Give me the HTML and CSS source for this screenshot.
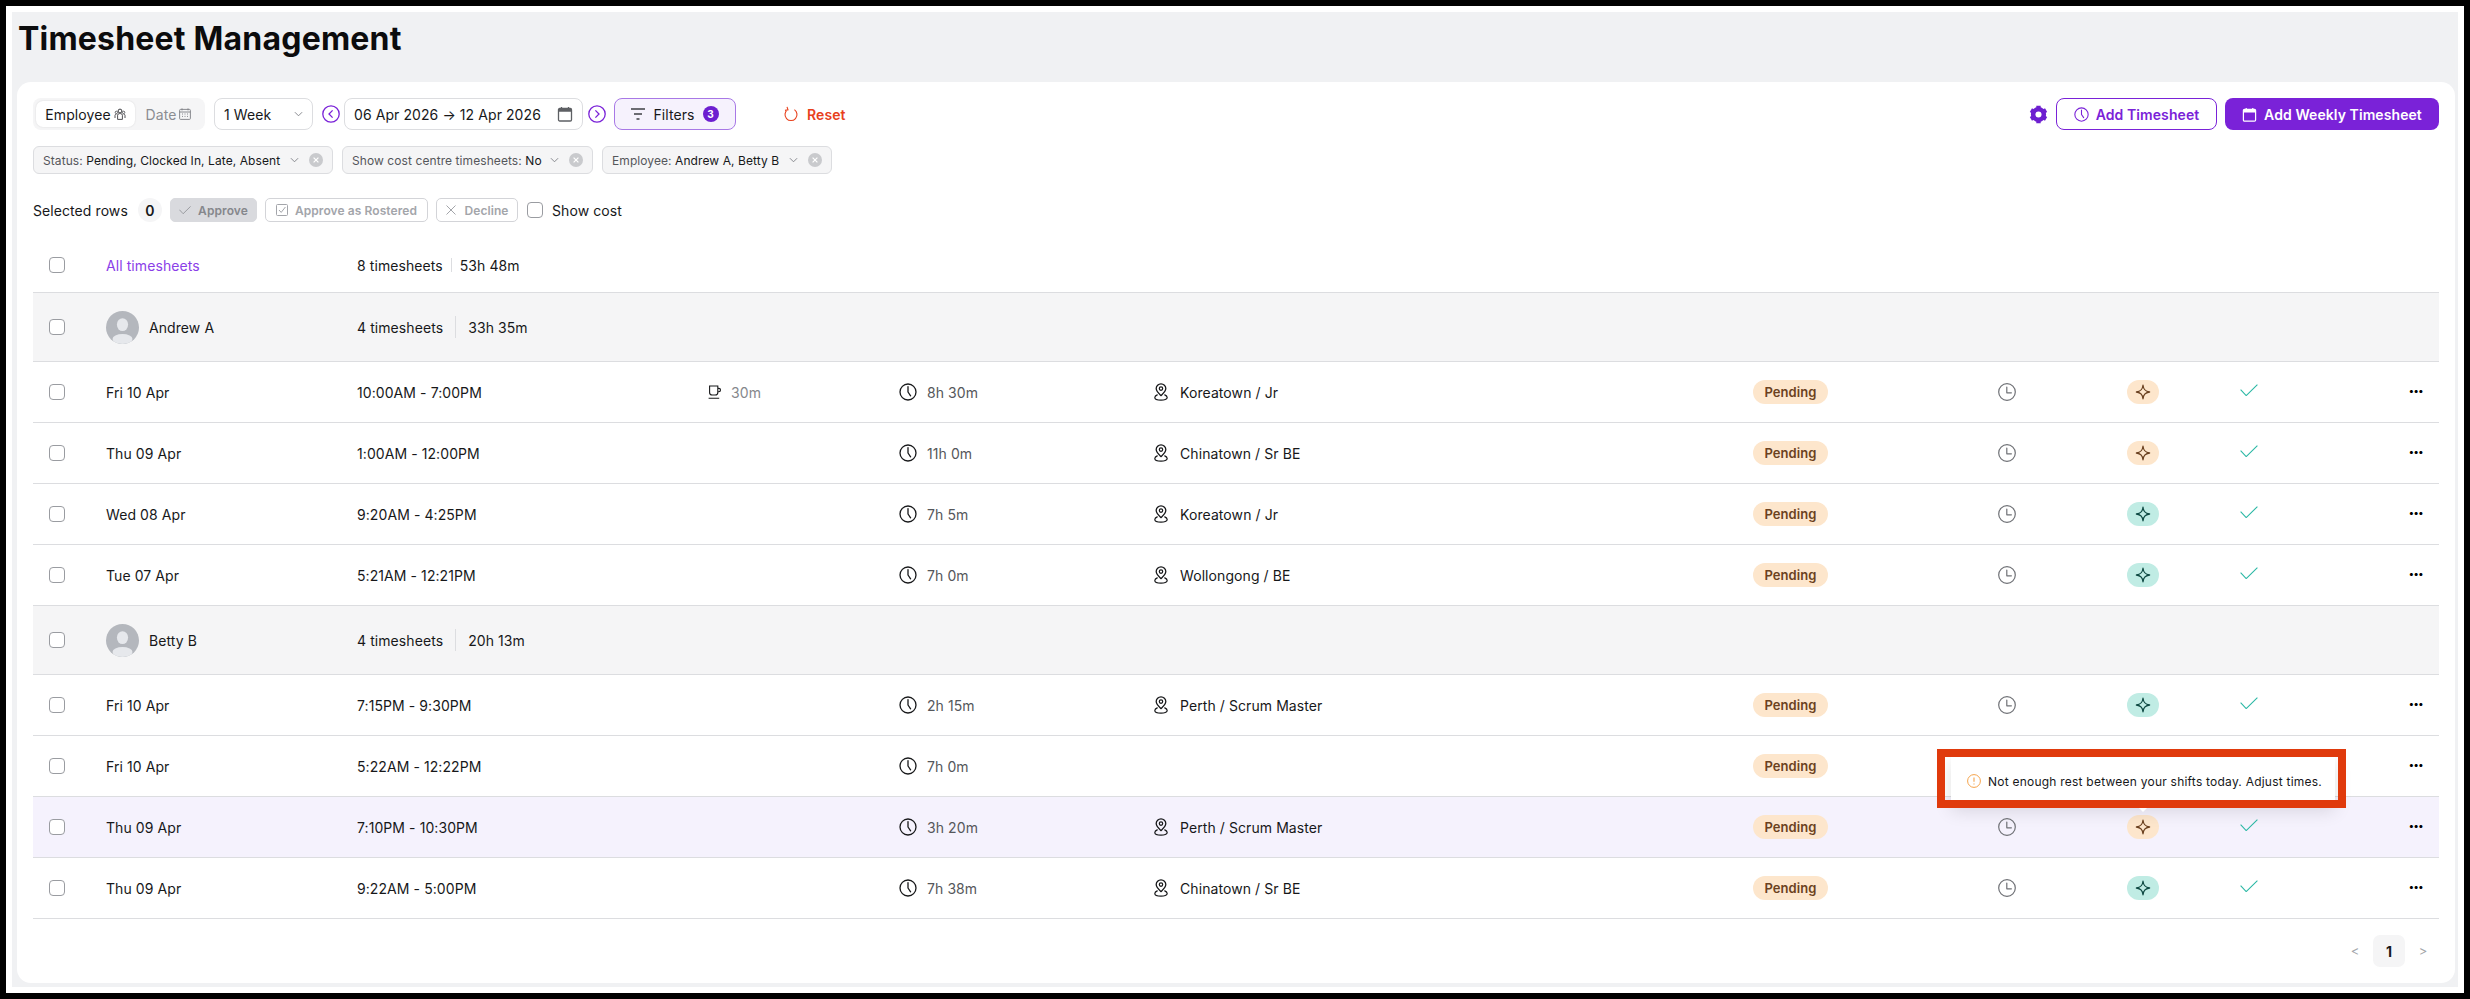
FILE: index.html
```html
<!DOCTYPE html>
<html lang="en">
<head>
  <meta charset="UTF-8">
  <meta name="viewport" content="width=device-width, initial-scale=1.0">
  <title>Timesheet Management</title>
  <link rel="stylesheet" href="styles.css">
</head>
<body>
  <!-- Icons -->
  <svg class="sprite" xmlns="http://www.w3.org/2000/svg">
    <symbol id="i-clock" viewBox="0 0 18 18"><circle cx="9" cy="9" r="8" fill="none" stroke="currentColor" stroke-width="1.3"/><path d="M9 3.6V9l2.6 3.8" fill="none" stroke="currentColor" stroke-width="1.3" stroke-linecap="round" stroke-linejoin="round"/></symbol>
    <symbol id="i-clock-l" viewBox="0 0 18 18"><circle cx="9" cy="9" r="8.3" fill="none" stroke="currentColor" stroke-width="1.2"/><path d="M8.8 4V9.8H13.4" fill="none" stroke="currentColor" stroke-width="1.2" stroke-linecap="round" stroke-linejoin="round"/></symbol>
    <symbol id="i-pin" viewBox="0 0 14 18"><path d="M7 12.6C4.6 10.4 2.2 8.4 2.2 5.6a4.8 4.8 0 0 1 9.6 0c0 2.8-2.4 4.8-4.8 7z" fill="none" stroke="currentColor" stroke-width="1.3"/><circle cx="7" cy="5.6" r="1.7" fill="none" stroke="currentColor" stroke-width="1.2"/><path d="M3.6 11.6C1.8 12.4.8 13.4.8 14.6c0 1.6 2.8 2.6 6.2 2.6s6.2-1 6.2-2.6c0-1.2-1-2.2-2.8-3" fill="none" stroke="currentColor" stroke-width="1.2"/></symbol>
    <symbol id="i-star" viewBox="0 0 16 16"><path d="M8 1.2C8.5 5.6 10 7.4 14.6 8 10 8.6 8.5 10.4 8 14.8 7.5 10.4 6 8.6 1.4 8 6 7.4 7.5 5.6 8 1.2z" fill="none" stroke="currentColor" stroke-width="1.3" stroke-linejoin="round"/></symbol>
    <symbol id="i-check" viewBox="0 0 18 12"><path d="M.6 5.6l5.6 6L17.4.6" fill="none" stroke="currentColor" stroke-width="1.1"/></symbol>
    <symbol id="i-chev" viewBox="0 0 10 6"><path d="M1 1l4 4 4-4" fill="none" stroke="currentColor" stroke-width="1"/></symbol>
    <symbol id="i-cal" viewBox="0 0 16 16"><rect x="1.5" y="2.5" width="13" height="12.5" rx="1.2" fill="none" stroke="currentColor" stroke-width="1.3"/><path d="M1.5 3.6a1 1 0 0 1 1-1h11a1 1 0 0 1 1 1v2.2h-13z" fill="currentColor"/><path d="M4.5 1v2M11.5 1v2" stroke="currentColor" stroke-width="1.3"/></symbol>
    <symbol id="i-x" viewBox="0 0 14 14"><circle cx="7" cy="7" r="7" fill="#c9cacd"/><path d="M4.6 4.6l4.8 4.8M9.4 4.6L4.6 9.4" stroke="#fff" stroke-width="1.2"/></symbol>
  </svg>

  <div class="frame">
    <main class="page">
      <h1>Timesheet Management</h1>

      <section class="card">
        <!-- Toolbar -->
        <div class="toolbar">
          <div class="segment">
            <span class="segment-on">Employee
              <svg class="ico-12 ico-dark" viewBox="0 0 12 12"><circle cx="6" cy="3" r="1.9" fill="none" stroke="currentColor"/><circle cx="2.4" cy="4.4" r="1.2" fill="none" stroke="currentColor" stroke-width=".8"/><circle cx="9.6" cy="4.4" r="1.2" fill="none" stroke="currentColor" stroke-width=".8"/><path d="M3.6 11.4V7.2a1.8 1.8 0 0 1 1.8-1.6h1.2a1.8 1.8 0 0 1 1.8 1.6v4.2zM1 10V7.4c0-.8.6-1.2 1.4-1.2M11 10V7.4c0-.8-.6-1.2-1.4-1.2" fill="none" stroke="currentColor" stroke-width=".9"/></svg>
            </span>
            <span class="segment-off">Date
              <svg class="ico-12" viewBox="0 0 12 12"><rect x=".6" y="1.4" width="10.8" height="10" rx="1" fill="none" stroke="currentColor" stroke-width=".9"/><path d="M.6 4h10.8M3 6h1M5.5 6h1M8 6h1M3 8.4h1M5.5 8.4h1M8 8.4h1M3 .4v2M9 .4v2" fill="none" stroke="currentColor" stroke-width=".9"/></svg>
            </span>
          </div>
          <div class="select week">1 Week <svg class="ico-chev"><use href="#i-chev"/></svg></div>
          <button class="round-nav"><svg viewBox="0 0 18 18"><circle cx="9" cy="9" r="8.2" fill="none" stroke="currentColor" stroke-width="1.3"/><path d="M10.6 5.4L7 9l3.6 3.6" fill="none" stroke="currentColor" stroke-width="1.3"/></svg></button>
          <div class="select date-range">06 Apr 2026 → 12 Apr 2026 <svg class="ico-cal"><use href="#i-cal"/></svg></div>
          <button class="round-nav next"><svg viewBox="0 0 18 18"><circle cx="9" cy="9" r="8.2" fill="none" stroke="currentColor" stroke-width="1.3"/><path d="M7.4 5.4L11 9l-3.6 3.6" fill="none" stroke="currentColor" stroke-width="1.3"/></svg></button>
          <button class="filters">
            <svg class="ico-filter" viewBox="0 0 14 12"><path d="M0 1h14M3 6h8M5.5 11h3" stroke="currentColor" stroke-width="1.3"/></svg>
            Filters <span class="count">3</span>
          </button>
          <button class="reset">
            <svg viewBox="0 0 14 16"><path d="M3.6 3.6a6 6 0 1 0 6.8 0M3 .8l1 3-3 .6" fill="none" stroke="currentColor" stroke-width="1.1"/></svg>
            Reset
          </button>
          <div class="toolbar-right">
            <svg class="gear" viewBox="0 0 20 20"><path d="M10 .8v18.4M2 5.4l16 9.2M2 14.6l16-9.2" stroke="currentColor" stroke-width="4.6"/><circle cx="10" cy="10" r="5.8" fill="none" stroke="currentColor" stroke-width="4.4"/><circle cx="10" cy="10" r="3.2" fill="#fff"/></svg>
            <button class="btn btn-outline"><svg class="ico-15"><use href="#i-clock"/></svg> Add Timesheet</button>
            <button class="btn btn-solid"><svg class="ico-15"><use href="#i-cal"/></svg> Add Weekly Timesheet</button>
          </div>
        </div>

        <!-- Active filters -->
        <div class="chips">
          <div class="chip chip-status"><span class="chip-key">Status:</span> Pending, Clocked In, Late, Absent <svg class="ico-chev"><use href="#i-chev"/></svg><svg class="ico-x"><use href="#i-x"/></svg></div>
          <div class="chip chip-cost"><span class="chip-key">Show cost centre timesheets:</span> No <svg class="ico-chev"><use href="#i-chev"/></svg><svg class="ico-x"><use href="#i-x"/></svg></div>
          <div class="chip chip-emp"><span class="chip-key">Employee:</span> Andrew A, Betty B <svg class="ico-chev"><use href="#i-chev"/></svg><svg class="ico-x"><use href="#i-x"/></svg></div>
        </div>

        <!-- Bulk actions -->
        <div class="bulk">
          <span class="bulk-label">Selected rows</span>
          <span class="bulk-count">0</span>
          <button class="act act-approve"><svg class="ico-check-sm"><use href="#i-check"/></svg> Approve</button>
          <button class="act act-rostered"><svg class="ico-12" viewBox="0 0 12 12"><rect x=".5" y=".5" width="11" height="11" rx="1" fill="none" stroke="currentColor"/><path d="M3 6l2.2 2.4L9.4 3" fill="none" stroke="currentColor"/></svg> Approve as Rostered</button>
          <button class="act act-decline"><svg class="ico-12" viewBox="0 0 12 12"><path d="M1.5 1.5l9 9M10.5 1.5l-9 9" stroke="currentColor"/></svg> Decline</button>
          <label class="show-cost"><span class="box"></span> Show cost</label>
        </div>

        <!-- Table -->
        <div class="table">
          <div class="row row-all">
            <div class="c-box"><span class="box"></span></div>
            <div class="link">All timesheets</div>
            <div class="summary span"><span>8 timesheets</span><span class="sep"></span><span>53h 48m</span></div>
          </div>

          <div class="row row-group">
            <div class="c-box"><span class="box"></span></div>
            <div class="person"><svg class="avatar" viewBox="0 0 33 33"><circle cx="16.5" cy="16.5" r="16.5" fill="#b4b7bd"/><ellipse cx="16.5" cy="13.6" rx="5.6" ry="6.4" fill="#e6e8ec"/><ellipse cx="16.5" cy="28" rx="10" ry="5" fill="#e6e8ec"/></svg> Andrew A</div>
            <div class="summary wide span"><span>4 timesheets</span><span class="sep"></span><span>33h 35m</span></div>
          </div>

          <div class="row">
            <div class="c-box"><span class="box"></span></div>
            <div>Fri 10 Apr</div>
            <div>10:00AM - 7:00PM</div>
            <div class="cell-break"><svg class="ico-cup" viewBox="0 0 14 14"><path d="M1.6 1h8.2v6.4a2.6 2.6 0 0 1-2.6 2.6H4.2a2.6 2.6 0 0 1-2.6-2.6zM9.8 3.4h1a1.6 1.6 0 0 1 0 3.4h-1M.6 13.2h10.6" fill="none" stroke="currentColor" stroke-width="1.1"/></svg> 30m</div>
            <div class="cell-hours"><svg class="ico-18"><use href="#i-clock"/></svg> 8h 30m</div>
            <div class="cell-loc"><svg class="ico-pin"><use href="#i-pin"/></svg> Koreatown / Jr</div>
            <div><span class="pill">Pending</span></div>
            <div class="cell-clock"><svg class="ico-18"><use href="#i-clock-l"/></svg></div>
            <div><span class="star star-orange"><svg class="ico-star"><use href="#i-star"/></svg></span></div>
            <div class="cell-check"><svg class="ico-check"><use href="#i-check"/></svg></div>
            <div class="dots">•••</div>
          </div>

          <div class="row">
            <div class="c-box"><span class="box"></span></div>
            <div>Thu 09 Apr</div>
            <div>1:00AM - 12:00PM</div>
            <div></div>
            <div class="cell-hours"><svg class="ico-18"><use href="#i-clock"/></svg> 11h 0m</div>
            <div class="cell-loc"><svg class="ico-pin"><use href="#i-pin"/></svg> Chinatown / Sr BE</div>
            <div><span class="pill">Pending</span></div>
            <div class="cell-clock"><svg class="ico-18"><use href="#i-clock-l"/></svg></div>
            <div><span class="star star-orange"><svg class="ico-star"><use href="#i-star"/></svg></span></div>
            <div class="cell-check"><svg class="ico-check"><use href="#i-check"/></svg></div>
            <div class="dots">•••</div>
          </div>

          <div class="row">
            <div class="c-box"><span class="box"></span></div>
            <div>Wed 08 Apr</div>
            <div>9:20AM - 4:25PM</div>
            <div></div>
            <div class="cell-hours"><svg class="ico-18"><use href="#i-clock"/></svg> 7h 5m</div>
            <div class="cell-loc"><svg class="ico-pin"><use href="#i-pin"/></svg> Koreatown / Jr</div>
            <div><span class="pill">Pending</span></div>
            <div class="cell-clock"><svg class="ico-18"><use href="#i-clock-l"/></svg></div>
            <div><span class="star star-teal"><svg class="ico-star"><use href="#i-star"/></svg></span></div>
            <div class="cell-check"><svg class="ico-check"><use href="#i-check"/></svg></div>
            <div class="dots">•••</div>
          </div>

          <div class="row">
            <div class="c-box"><span class="box"></span></div>
            <div>Tue 07 Apr</div>
            <div>5:21AM - 12:21PM</div>
            <div></div>
            <div class="cell-hours"><svg class="ico-18"><use href="#i-clock"/></svg> 7h 0m</div>
            <div class="cell-loc"><svg class="ico-pin"><use href="#i-pin"/></svg> Wollongong / BE</div>
            <div><span class="pill">Pending</span></div>
            <div class="cell-clock"><svg class="ico-18"><use href="#i-clock-l"/></svg></div>
            <div><span class="star star-teal"><svg class="ico-star"><use href="#i-star"/></svg></span></div>
            <div class="cell-check"><svg class="ico-check"><use href="#i-check"/></svg></div>
            <div class="dots">•••</div>
          </div>

          <div class="row row-group">
            <div class="c-box"><span class="box"></span></div>
            <div class="person"><svg class="avatar" viewBox="0 0 33 33"><circle cx="16.5" cy="16.5" r="16.5" fill="#b4b7bd"/><ellipse cx="16.5" cy="13.6" rx="5.6" ry="6.4" fill="#e6e8ec"/><ellipse cx="16.5" cy="28" rx="10" ry="5" fill="#e6e8ec"/></svg> Betty B</div>
            <div class="summary wide span"><span>4 timesheets</span><span class="sep"></span><span>20h 13m</span></div>
          </div>

          <div class="row">
            <div class="c-box"><span class="box"></span></div>
            <div>Fri 10 Apr</div>
            <div>7:15PM - 9:30PM</div>
            <div></div>
            <div class="cell-hours"><svg class="ico-18"><use href="#i-clock"/></svg> 2h 15m</div>
            <div class="cell-loc"><svg class="ico-pin"><use href="#i-pin"/></svg> Perth / Scrum Master</div>
            <div><span class="pill">Pending</span></div>
            <div class="cell-clock"><svg class="ico-18"><use href="#i-clock-l"/></svg></div>
            <div><span class="star star-teal"><svg class="ico-star"><use href="#i-star"/></svg></span></div>
            <div class="cell-check"><svg class="ico-check"><use href="#i-check"/></svg></div>
            <div class="dots">•••</div>
          </div>

          <div class="row">
            <div class="c-box"><span class="box"></span></div>
            <div>Fri 10 Apr</div>
            <div>5:22AM - 12:22PM</div>
            <div></div>
            <div class="cell-hours"><svg class="ico-18"><use href="#i-clock"/></svg> 7h 0m</div>
            <div></div>
            <div><span class="pill">Pending</span></div>
            <div></div>
            <div></div>
            <div></div>
            <div class="dots">•••</div>
          </div>

          <div class="row row-hover">
            <div class="c-box"><span class="box"></span></div>
            <div>Thu 09 Apr</div>
            <div>7:10PM - 10:30PM</div>
            <div></div>
            <div class="cell-hours"><svg class="ico-18"><use href="#i-clock"/></svg> 3h 20m</div>
            <div class="cell-loc"><svg class="ico-pin"><use href="#i-pin"/></svg> Perth / Scrum Master</div>
            <div><span class="pill">Pending</span></div>
            <div class="cell-clock"><svg class="ico-18"><use href="#i-clock-l"/></svg></div>
            <div>
              <span class="star star-orange">
                <svg class="ico-star"><use href="#i-star"/></svg>
                <span class="tooltip">
                  <svg class="ico-warn" viewBox="0 0 14 14"><circle cx="7" cy="7" r="6.4" fill="none" stroke="currentColor" stroke-width="1"/><path d="M7 3.4v4.4M7 9.4v1.2" stroke="currentColor" stroke-width="1.1"/></svg>
                  Not enough rest between your shifts today. Adjust times.
                </span>
              </span>
            </div>
            <div class="cell-check"><svg class="ico-check"><use href="#i-check"/></svg></div>
            <div class="dots">•••</div>
          </div>

          <div class="row">
            <div class="c-box"><span class="box"></span></div>
            <div>Thu 09 Apr</div>
            <div>9:22AM - 5:00PM</div>
            <div></div>
            <div class="cell-hours"><svg class="ico-18"><use href="#i-clock"/></svg> 7h 38m</div>
            <div class="cell-loc"><svg class="ico-pin"><use href="#i-pin"/></svg> Chinatown / Sr BE</div>
            <div><span class="pill">Pending</span></div>
            <div class="cell-clock"><svg class="ico-18"><use href="#i-clock-l"/></svg></div>
            <div><span class="star star-teal"><svg class="ico-star"><use href="#i-star"/></svg></span></div>
            <div class="cell-check"><svg class="ico-check"><use href="#i-check"/></svg></div>
            <div class="dots">•••</div>
          </div>
        </div>

        <!-- Pagination -->
        <div class="pager">
          <span class="pager-arrow">&lt;</span>
          <span class="pager-page">1</span>
          <span class="pager-arrow">&gt;</span>
        </div>
      </section>
    </main>
  </div>
</body>
</html>
```

FILE: styles.css
```css
/* Global */
* {
  margin: 0;
  padding: 0;
  box-sizing: border-box;
  font-family: Inter, "Liberation Sans", sans-serif;
}
html, body {
  height: 999px;
  overflow: hidden;
}
body {
  background: #000;
  padding: 6px;
  color: #17181a;
  font-size: 14px;
  letter-spacing: 0.08px;
}
button {
  background: none;
  border: none;
  color: inherit;
  font-size: inherit;
  letter-spacing: inherit;
}
.sprite {
  display: none;
}
.frame {
  background: #fff;
  padding: 6px;
  height: 100%;
}
.page {
  background: #f0f1f3;
  height: 100%;
  padding: 0 3px 0 5px;
}
h1 {
  font-size: 32px;
  line-height: 38px;
  font-weight: 700;
  letter-spacing: 0.2px;
  color: #0c0c0d;
  padding: 8px 0 0 1px;
  height: 70px;
}
/* Card */
.card {
  background: #fff;
  border-radius: 14px;
  padding: 16px;
  height: 901px;
}
/* Toolbar */
.toolbar {
  display: flex;
  align-items: center;
  height: 32px;
}
.segment {
  width: 172px;
  height: 32px;
  background: #f5f5f6;
  border-radius: 8px;
  padding: 3px;
  display: flex;
  align-items: center;
  color: #8b8d92;
}
.segment-on {
  width: 99px;
  height: 26px;
  background: #fff;
  color: #17181a;
  border-radius: 7px;
  box-shadow: 0 0 2px rgba(0, 0, 0, 0.12);
  display: flex;
  align-items: center;
  justify-content: center;
  gap: 3px;
}
.segment-off {
  flex: 1;
  display: flex;
  align-items: center;
  justify-content: center;
  gap: 3px;
}
.ico-12 {
  width: 12px;
  height: 12px;
  color: #7d7f84;
  flex-shrink: 0;
}
.ico-dark {
  color: #3f4044;
}
.select {
  height: 32px;
  border: 1px solid #dcdde0;
  border-radius: 8px;
  display: flex;
  align-items: center;
  justify-content: space-between;
  padding: 0 9px;
  white-space: nowrap;
}
.week {
  width: 99px;
  margin-left: 9px;
}
.ico-chev {
  width: 9px;
  height: 6px;
  color: #7d7f84;
  flex-shrink: 0;
}
.date-range {
  width: 239px;
  margin-left: 4px;
}
.ico-cal {
  width: 16px;
  height: 16px;
  color: #5e6064;
}
.round-nav {
  width: 18px;
  height: 18px;
  margin-left: 9px;
  color: #7a22d8;
  display: flex;
}
.round-nav.next {
  margin-left: 5px;
}
.round-nav svg {
  width: 18px;
  height: 18px;
}
.filters {
  width: 122px;
  height: 32px;
  margin-left: 8px;
  background: #f6f2fd;
  border: 1px solid #a878e6;
  border-radius: 8px;
  display: flex;
  align-items: center;
  justify-content: center;
  gap: 8px;
}
.ico-filter {
  width: 14px;
  height: 12px;
  color: #3f4044;
}
.count {
  width: 16px;
  height: 16px;
  border-radius: 50%;
  background: #6d1fd0;
  color: #fff;
  font-size: 10px;
  font-weight: 700;
  display: flex;
  align-items: center;
  justify-content: center;
}
.reset {
  margin-left: 48px;
  display: flex;
  align-items: center;
  gap: 9px;
  color: #e8401c;
  font-weight: 600;
}
.reset svg {
  width: 14px;
  height: 16px;
}
.toolbar-right {
  margin-left: auto;
  display: flex;
  align-items: center;
}
.gear {
  width: 19px;
  height: 19px;
  color: #6d1fd0;
  margin-right: 8px;
}
.btn {
  height: 32px;
  border-radius: 8px;
  display: flex;
  align-items: center;
  justify-content: center;
  gap: 7px;
  font-weight: 600;
  white-space: nowrap;
}
.btn-outline {
  width: 161px;
  border: 1px solid #7a22d8;
  color: #7a22d8;
}
.btn-solid {
  width: 214px;
  margin-left: 8px;
  background: #7a22d8;
  color: #fff;
}
.ico-15 {
  width: 15px;
  height: 15px;
}
/* Filter chips */
.chips {
  display: flex;
  gap: 9px;
  margin-top: 16px;
  height: 28px;
}
.chip {
  background: #f5f5f6;
  border: 1px solid #dcdde0;
  border-radius: 6px;
  display: flex;
  align-items: center;
  padding: 0 9px;
  font-size: 12px;
  color: #17181a;
  white-space: pre;
}
.chip-status {
  width: 300px;
}
.chip-cost {
  width: 251px;
}
.chip-emp {
  width: 230px;
}
.chip-key {
  color: #55575b;
}
.chip .ico-chev {
  margin-left: auto;
}
.ico-x {
  width: 14px;
  height: 14px;
  margin-left: 10px;
  flex-shrink: 0;
}
/* Bulk actions */
.bulk {
  display: flex;
  align-items: center;
  height: 24px;
  margin-top: 24px;
}
.bulk-label {
  width: 105px;
}
.bulk-count {
  width: 24px;
  height: 24px;
  border-radius: 50%;
  background: #f5f5f6;
  font-weight: 600;
  display: flex;
  align-items: center;
  justify-content: center;
}
.act {
  height: 24px;
  border-radius: 5px;
  border: 1px solid #d3d4d8;
  color: #a3a5aa;
  font-size: 12px;
  font-weight: 600;
  display: flex;
  align-items: center;
  justify-content: center;
  gap: 7px;
  margin-left: 8px;
}
.act-approve {
  width: 87px;
  background: #d9dade;
  border-color: #d9dade;
  color: #85878c;
}
.act-rostered {
  width: 163px;
}
.act-decline {
  width: 82px;
}
.ico-check-sm {
  width: 12px;
  height: 8px;
}
.act .ico-12 {
  color: #a3a5aa;
}
.show-cost {
  display: flex;
  align-items: center;
  gap: 9px;
  margin-left: 9px;
}
.box {
  display: block;
  width: 16px;
  height: 16px;
  border: 1px solid #9a9ca1;
  border-radius: 4px;
  background: #fff;
}
/* Table */
.table {
  margin-top: 16px;
}
.row {
  display: grid;
  grid-template-columns: 73px 251px 351px 191px 255px 599px 245px 129px 113px 169px 30px;
  align-items: center;
  height: 61px;
  border-bottom: 1px solid #dcdde0;
  white-space: nowrap;
}
.row-all {
  height: 55px;
}
.row-group {
  height: 69px;
  background: #f5f5f6;
}
.row-hover {
  background: #f5f2fd;
}
.c-box {
  padding-left: 16px;
}
.span {
  grid-column: 3 / -1;
}
.link {
  color: #8a3ee8;
}
.person {
  display: flex;
  align-items: center;
  gap: 10px;
}
.avatar {
  width: 33px;
  height: 33px;
}
.summary {
  display: flex;
  align-items: center;
  gap: 8px;
}
.sep {
  width: 1px;
  height: 14px;
  background: #dcdde0;
}
.summary.wide {
  gap: 12px;
}
.summary.wide .sep {
  height: 22px;
}
.cell-break {
  display: flex;
  align-items: center;
  gap: 9px;
  color: #85878c;
}
.ico-cup {
  width: 14px;
  height: 14px;
  color: #17181a;
}
.cell-hours {
  display: flex;
  align-items: center;
  gap: 10px;
  color: #55575b;
}
.ico-18 {
  width: 18px;
  height: 18px;
  color: #17181a;
  display: block;
}
.cell-loc {
  display: flex;
  align-items: center;
  gap: 12px;
}
.ico-pin {
  width: 14px;
  height: 18px;
}
.pill {
  display: inline-flex;
  width: 75px;
  height: 24px;
  align-items: center;
  justify-content: center;
  border-radius: 12px;
  background: #fde6cc;
  color: #6b4120;
  font-size: 13px;
  font-weight: 600;
}
.cell-clock .ico-18 {
  color: #6f7176;
}
.star {
  position: relative;
  display: flex;
  width: 32px;
  height: 24px;
  border-radius: 12px;
  align-items: center;
  justify-content: center;
}
.star-orange {
  background: #fde6cc;
  color: #6b4120;
}
.star-teal {
  background: #c0ece4;
  color: #0f4a43;
}
.ico-star {
  width: 16px;
  height: 16px;
}
.cell-check {
  display: flex;
  padding-bottom: 5px;
}
.ico-check {
  width: 18px;
  height: 12px;
  color: #2bb8a5;
}
.dots {
  font-size: 10px;
  font-weight: 700;
  letter-spacing: 0;
  color: #000;
  padding: 0 0 4px 0;
}
/* Tooltip */
.tooltip {
  position: absolute;
  z-index: 5;
  left: 50%;
  bottom: calc(100% + 10px);
  width: 384px;
  height: 48px;
  margin-left: -192px;
  background: #fff;
  color: #17181a;
  padding-left: 16px;
  display: flex;
  align-items: center;
  gap: 7px;
  font-size: 12px;
  letter-spacing: 0.23px;
  box-shadow: 0 6px 18px rgba(0, 0, 0, 0.12);
}
.tooltip::before {
  content: "";
  position: absolute;
  left: 50%;
  top: 100%;
  margin-left: -7px;
  border: 7px solid transparent;
  border-top-color: #fff;
  border-bottom: 0;
}
/* Highlight box drawn on the screenshot */
.tooltip::after {
  content: "";
  position: absolute;
  left: -14px;
  right: -11px;
  top: -8px;
  bottom: -3px;
  border: 8px solid #e03a0c;
}
.ico-warn {
  width: 14px;
  height: 14px;
  color: #f5a34a;
  flex-shrink: 0;
}
/* Pagination */
.pager {
  display: flex;
  justify-content: flex-end;
  align-items: center;
  gap: 2px;
  margin-top: 16px;
}
.pager-arrow {
  width: 32px;
  text-align: center;
  color: #a3a5aa;
  font-size: 13px;
}
.pager-page {
  width: 32px;
  height: 32px;
  border-radius: 7px;
  background: #f5f5f6;
  font-weight: 700;
  display: flex;
  align-items: center;
  justify-content: center;
}
```
